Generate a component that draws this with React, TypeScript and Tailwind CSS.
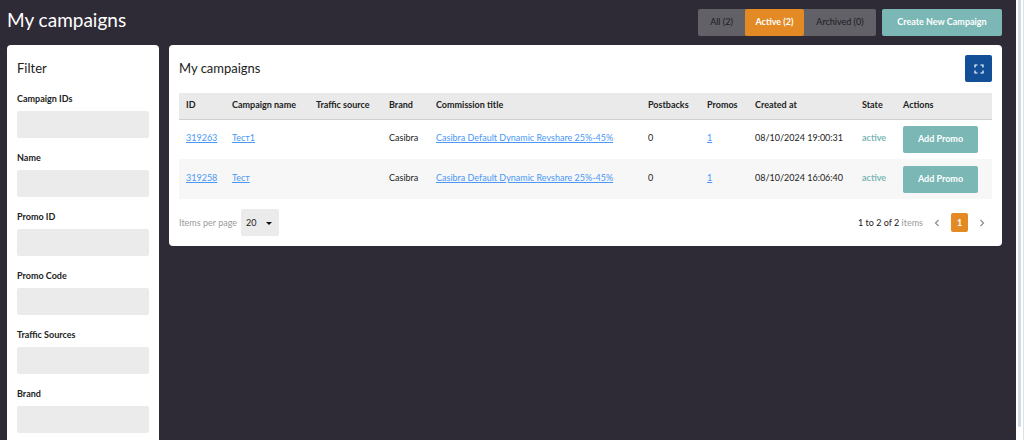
import React, { useState } from 'react';

interface Campaign {
  id: string;
  name: string;
  source: string;
  brand: string;
  commission: string;
  postbacks: number;
  promos: number;
  createdAt: string;
  state: string;
}

const campaigns: Campaign[] = [
  {
    id: '319263',
    name: 'Тест1',
    source: '',
    brand: 'Casibra',
    commission: 'Casibra Default Dynamic Revshare 25%-45%',
    postbacks: 0,
    promos: 1,
    createdAt: '08/10/2024 19:00:31',
    state: 'active',
  },
  {
    id: '319258',
    name: 'Тест',
    source: '',
    brand: 'Casibra',
    commission: 'Casibra Default Dynamic Revshare 25%-45%',
    postbacks: 0,
    promos: 1,
    createdAt: '08/10/2024 16:06:40',
    state: 'active',
  },
];

const filters = [
  { id: 'campaign-ids', label: 'Campaign IDs' },
  { id: 'name', label: 'Name' },
  { id: 'promo-id', label: 'Promo ID' },
  { id: 'promo-code', label: 'Promo Code' },
  { id: 'traffic-sources', label: 'Traffic Sources' },
  { id: 'brand', label: 'Brand' },
];

const columns = [
  { title: 'ID', width: 'w-[46px]' },
  { title: 'Campaign name', width: 'w-[84px]' },
  { title: 'Traffic source', width: 'w-[73px]' },
  { title: 'Brand', width: 'w-[47px]' },
  { title: 'Commission title', width: 'w-[212px]' },
  { title: 'Postbacks', width: 'w-[59px]' },
  { title: 'Promos', width: 'w-[48px]' },
  { title: 'Created at', width: 'w-[107px]' },
  { title: 'State', width: 'w-[41px]' },
  { title: 'Actions', width: 'w-[96px]' },
];

const tabs = [
  { key: 'all', label: 'All (2)', width: 'w-[47px]' },
  { key: 'active', label: 'Active (2)', width: 'w-[59px]' },
  { key: 'archived', label: 'Archived (0)', width: 'w-[72px]' },
];

const TextLink: React.FC<{ children: React.ReactNode }> = ({ children }) => (
  <a href="#" className="text-[#4a97f5] underline underline-offset-1">
    {children}
  </a>
);

const Chevron: React.FC<{ d: string }> = ({ d }) => (
  <svg viewBox="0 0 6 8" className="w-[6px] h-[8px]" fill="none" stroke="#8d8d8d" strokeWidth="1.2">
    <path d={d} />
  </svg>
);

const FilterPanel: React.FC = () => (
  <aside className="w-[152px] flex-shrink-0 bg-white rounded-sm p-[10px]">
    <h2 className="text-[13px] leading-[26px]">Filter</h2>
    <form className="flex flex-col gap-[14px] mt-[12px]">
      {filters.map((f) => (
        <div key={f.id} className="flex flex-col gap-[6px]">
          <label htmlFor={f.id} className="text-[9px] leading-[12px] font-bold">
            {f.label}
          </label>
          <input id={f.id} type="text" className="w-full h-[27px] px-2 text-[9px] bg-[#ebebeb] rounded-xs outline-none" />
        </div>
      ))}
    </form>
  </aside>
);

const CampaignTable: React.FC = () => (
  <table className="w-full table-fixed text-left text-[9px] leading-[12px] whitespace-nowrap">
    <thead>
      <tr className="h-[26px] bg-[#eaeaea] border-b border-[#cfcfcf]">
        {columns.map((c) => (
          <th key={c.title} className={`${c.width} pl-[7px] pb-[2px] font-bold`}>
            {c.title}
          </th>
        ))}
      </tr>
    </thead>
    <tbody>
      {campaigns.map((c) => (
        <tr key={c.id} className="h-[40px] even:bg-[#f7f7f7]">
          <td className="pl-[7px] pb-[2px]"><TextLink>{c.id}</TextLink></td>
          <td className="pl-[7px] pb-[2px]"><TextLink>{c.name}</TextLink></td>
          <td className="pl-[7px] pb-[2px]">{c.source}</td>
          <td className="pl-[7px] pb-[2px]">{c.brand}</td>
          <td className="pl-[7px] pb-[2px]"><TextLink>{c.commission}</TextLink></td>
          <td className="pl-[7px] pb-[2px]">{c.postbacks}</td>
          <td className="pl-[7px] pb-[2px]"><TextLink>{c.promos}</TextLink></td>
          <td className="pl-[7px] pb-[2px]">{c.createdAt}</td>
          <td className="pl-[7px] pb-[2px] font-bold text-[#7ab7b5]">{c.state}</td>
          <td className="pl-[7px]">
            <button className="block w-[75px] h-[27px] rounded-xs bg-[#7ab7b5] text-white font-bold cursor-pointer">
              Add Promo
            </button>
          </td>
        </tr>
      ))}
    </tbody>
  </table>
);

const Pagination: React.FC = () => (
  <div className="flex items-center justify-between mt-[10px] text-[9px] leading-[12px]">
    <div className="flex items-center gap-[4px]">
      <label htmlFor="per-page" className="text-[#9b9b9b]">Items per page</label>
      <div className="relative">
        <select
          id="per-page"
          defaultValue="20"
          className="block appearance-none w-[38px] h-[27px] pl-[5px] rounded-xs bg-[#ebebeb] outline-none"
        >
          <option>20</option>
          <option>50</option>
          <option>100</option>
        </select>
        <svg viewBox="0 0 6 3" className="absolute right-[7px] top-[13px] w-[6px] h-[3px] pointer-events-none">
          <path d="M0 0h6L3 3z" fill="#111" />
        </svg>
      </div>
    </div>

    <div className="flex items-center gap-[6px] pr-[2px]">
      <span className="text-[#9b9b9b]">
        <span className="text-[#222]">1 to 2 of 2</span> items
      </span>
      <button aria-label="Previous page" className="w-[16px] h-[19px] flex items-center justify-center cursor-pointer">
        <Chevron d="M4.5 1 1.5 4l3 3" />
      </button>
      <button className="w-[17px] h-[19px] rounded-xs bg-[#e38a24] text-white font-bold cursor-pointer">1</button>
      <button aria-label="Next page" className="w-[16px] h-[19px] flex items-center justify-center cursor-pointer">
        <Chevron d="m1.5 1 3 3-3 3" />
      </button>
    </div>
  </div>
);

export default function App() {
  const [tab, setTab] = useState('active');

  return (
    <div className="h-screen flex bg-white overflow-hidden font-['Lato',sans-serif] text-[#222]">
      <div className="flex-1 min-w-0 bg-[#2e2b36] overflow-hidden pl-[7px] pr-[14px]">
        {/* Page header */}
        <header className="flex items-start justify-between py-[9px]">
          <h1 className="text-[19px] leading-[22px] text-white">My campaigns</h1>
          <div className="flex gap-[6px] text-[9px] leading-[12px]">
            <div className="flex h-[27px] rounded-xs bg-[#626167]">
              {tabs.map((t) => (
                <button
                  key={t.key}
                  onClick={() => setTab(t.key)}
                  className={`${t.width} pb-[2px] rounded-xs cursor-pointer ${
                    tab === t.key ? 'bg-[#e38a24] text-white font-bold' : 'text-[#1c1b20]'
                  }`}
                >
                  {t.label}
                </button>
              ))}
            </div>
            <button className="w-[120px] h-[27px] pb-[2px] rounded-xs bg-[#7ab7b5] text-white font-bold cursor-pointer">
              Create New Campaign
            </button>
          </div>
        </header>

        <div className="flex items-start gap-[10px]">
          <FilterPanel />

          {/* Campaign list */}
          <main className="flex-1 min-w-0 bg-white rounded-sm p-[10px]">
            <div className="flex items-start justify-between mb-[11px]">
              <h2 className="text-[13px] leading-[26px]">My campaigns</h2>
              <button
                aria-label="Fullscreen"
                className="w-[27px] h-[27px] rounded-xs bg-[#134f96] flex items-center justify-center cursor-pointer"
              >
                <svg viewBox="0 0 10 10" className="w-[10px] h-[10px]" fill="none" stroke="#fff" strokeWidth="1.2">
                  <path d="M1 3.500V1h2.500M6.500 1H9v2.500M9 6.500V9H6.500M3.500 9H1V6.500" />
                </svg>
              </button>
            </div>
            <CampaignTable />
            <Pagination />
          </main>
        </div>
      </div>

      {/* Scroll track */}
      <div className="w-[8px] flex-shrink-0 pl-[2px] border-r border-[#dbe3ea]">
        <div className="w-[3px] h-[97%] bg-[#d0dde7] rounded-b-xs" />
      </div>
    </div>
  );
}
